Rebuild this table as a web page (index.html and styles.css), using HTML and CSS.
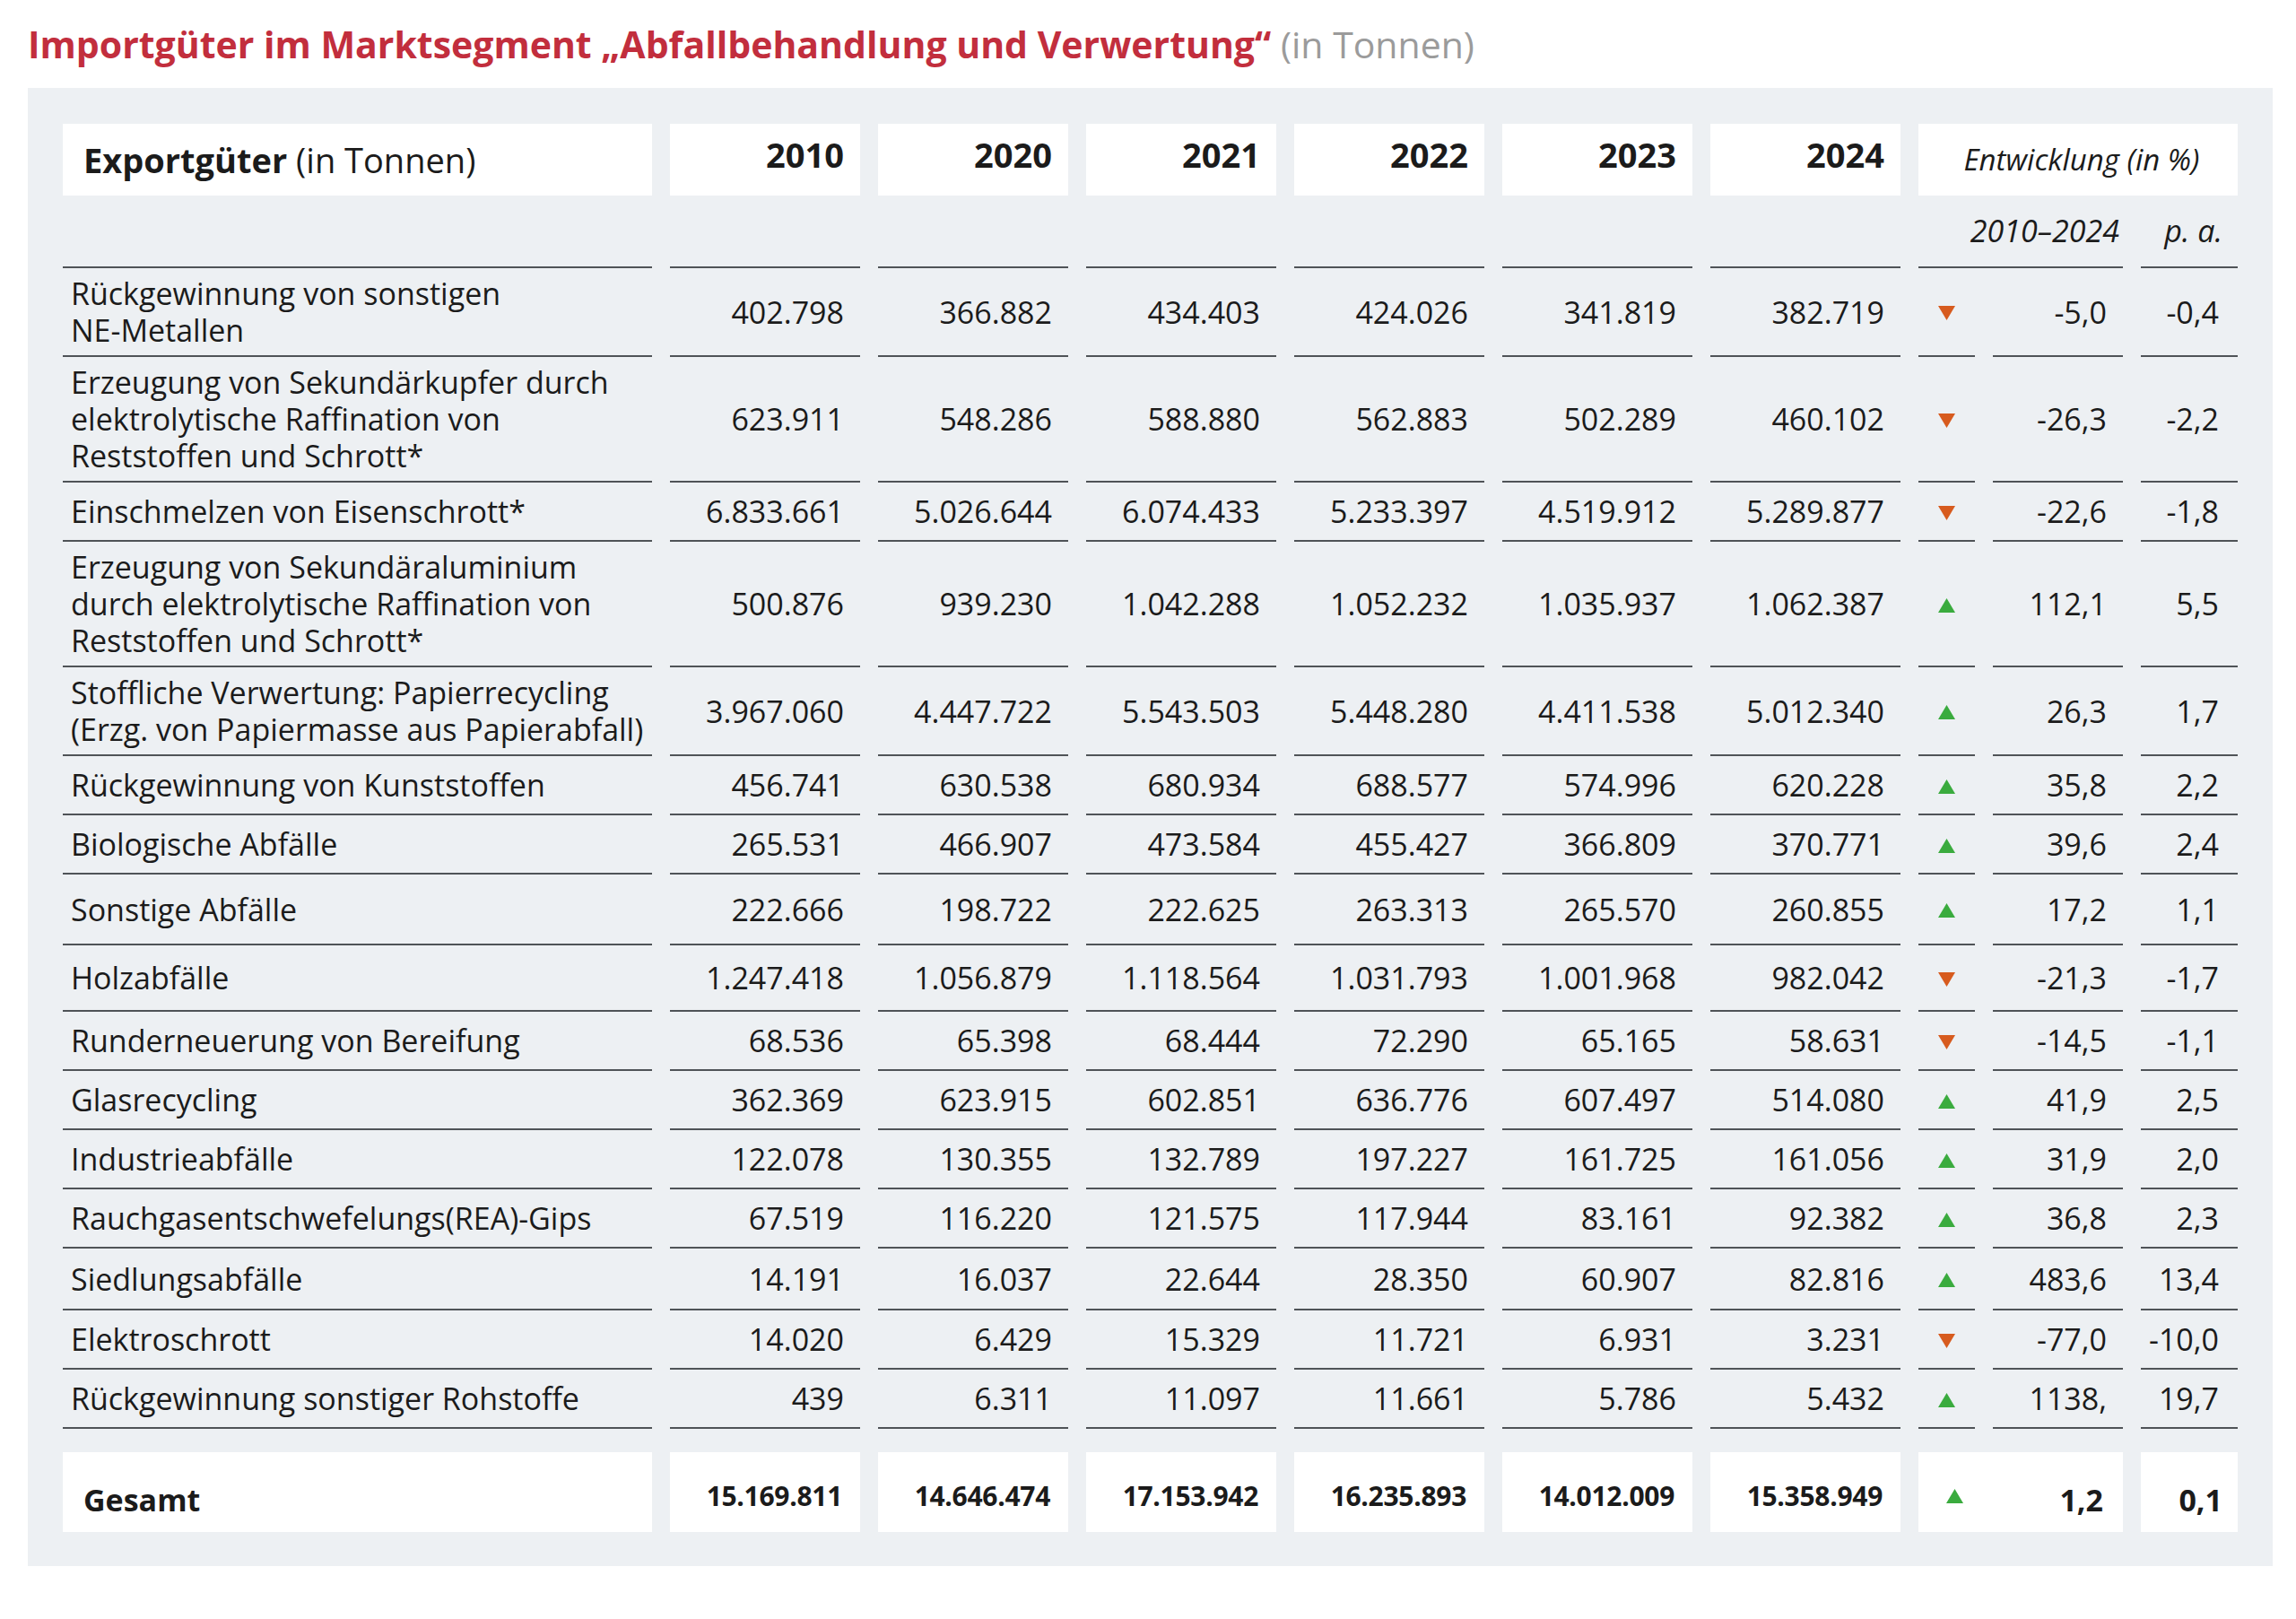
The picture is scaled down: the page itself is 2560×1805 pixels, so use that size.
FILE: index.html
```html
<!DOCTYPE html>
<html lang="de">
<head>
<meta charset="utf-8">
<title>Importgüter im Marktsegment Abfallbehandlung und Verwertung</title>
<link rel="stylesheet" href="styles.css">
</head>
<body>
<div class="page">
  <h1 class="title">Importgüter im Marktsegment „Abfallbehandlung und Verwertung“ <span class="title-unit">(in Tonnen)</span></h1>
  <div class="panel">
    <table class="data">
      <colgroup>
        <col class="c-label"><col class="c-year"><col class="c-year"><col class="c-year"><col class="c-year"><col class="c-year"><col class="c-year"><col class="c-arrow"><col class="c-dev"><col class="c-pa">
      </colgroup>
      <thead>
        <tr class="head">
          <th class="lbl"><b>Exportgüter</b> <span class="unit">(in Tonnen)</span></th>
          <th class="num">2010</th><th class="num">2020</th><th class="num">2021</th><th class="num">2022</th><th class="num">2023</th><th class="num">2024</th>
          <th class="dev-head" colspan="3">Entwicklung (in %)</th>
        </tr>
        <tr class="sub">
          <td></td><td></td><td></td><td></td><td></td><td></td><td></td>
          <td class="sub-span" colspan="2">2010–2024</td>
          <td class="sub-pa">p. a.</td>
        </tr>
      </thead>
      <tbody>
        <tr class="row"><td class="lbl">Rückgewinnung von sonstigen<br>NE-Metallen</td><td class="num">402.798</td><td class="num">366.882</td><td class="num">434.403</td><td class="num">424.026</td><td class="num">341.819</td><td class="num">382.719</td><td class="arr"><svg class="tri" viewBox="0 0 19 16" width="19" height="16"><polygon class="down" points="0,0 19,0 9.5,16"/></svg></td><td class="num">-5,0</td><td class="num pa">-0,4</td></tr>
        <tr class="row"><td class="lbl">Erzeugung von Sekundärkupfer durch<br>elektrolytische Raffination von<br>Reststoffen und Schrott*</td><td class="num">623.911</td><td class="num">548.286</td><td class="num">588.880</td><td class="num">562.883</td><td class="num">502.289</td><td class="num">460.102</td><td class="arr"><svg class="tri" viewBox="0 0 19 16" width="19" height="16"><polygon class="down" points="0,0 19,0 9.5,16"/></svg></td><td class="num">-26,3</td><td class="num pa">-2,2</td></tr>
        <tr class="row"><td class="lbl">Einschmelzen von Eisenschrott*</td><td class="num">6.833.661</td><td class="num">5.026.644</td><td class="num">6.074.433</td><td class="num">5.233.397</td><td class="num">4.519.912</td><td class="num">5.289.877</td><td class="arr"><svg class="tri" viewBox="0 0 19 16" width="19" height="16"><polygon class="down" points="0,0 19,0 9.5,16"/></svg></td><td class="num">-22,6</td><td class="num pa">-1,8</td></tr>
        <tr class="row"><td class="lbl">Erzeugung von Sekundäraluminium<br>durch elektrolytische Raffination von<br>Reststoffen und Schrott*</td><td class="num">500.876</td><td class="num">939.230</td><td class="num">1.042.288</td><td class="num">1.052.232</td><td class="num">1.035.937</td><td class="num">1.062.387</td><td class="arr"><svg class="tri" viewBox="0 0 19 16" width="19" height="16"><polygon class="up" points="9.5,0 19,16 0,16"/></svg></td><td class="num">112,1</td><td class="num pa">5,5</td></tr>
        <tr class="row"><td class="lbl">Stoffliche Verwertung: Papierrecycling<br>(Erzg. von Papiermasse aus Papierabfall)</td><td class="num">3.967.060</td><td class="num">4.447.722</td><td class="num">5.543.503</td><td class="num">5.448.280</td><td class="num">4.411.538</td><td class="num">5.012.340</td><td class="arr"><svg class="tri" viewBox="0 0 19 16" width="19" height="16"><polygon class="up" points="9.5,0 19,16 0,16"/></svg></td><td class="num">26,3</td><td class="num pa">1,7</td></tr>
        <tr class="row"><td class="lbl">Rückgewinnung von Kunststoffen</td><td class="num">456.741</td><td class="num">630.538</td><td class="num">680.934</td><td class="num">688.577</td><td class="num">574.996</td><td class="num">620.228</td><td class="arr"><svg class="tri" viewBox="0 0 19 16" width="19" height="16"><polygon class="up" points="9.5,0 19,16 0,16"/></svg></td><td class="num">35,8</td><td class="num pa">2,2</td></tr>
        <tr class="row"><td class="lbl">Biologische Abfälle</td><td class="num">265.531</td><td class="num">466.907</td><td class="num">473.584</td><td class="num">455.427</td><td class="num">366.809</td><td class="num">370.771</td><td class="arr"><svg class="tri" viewBox="0 0 19 16" width="19" height="16"><polygon class="up" points="9.5,0 19,16 0,16"/></svg></td><td class="num">39,6</td><td class="num pa">2,4</td></tr>
        <tr class="row row-xl"><td class="lbl">Sonstige Abfälle</td><td class="num">222.666</td><td class="num">198.722</td><td class="num">222.625</td><td class="num">263.313</td><td class="num">265.570</td><td class="num">260.855</td><td class="arr"><svg class="tri" viewBox="0 0 19 16" width="19" height="16"><polygon class="up" points="9.5,0 19,16 0,16"/></svg></td><td class="num">17,2</td><td class="num pa">1,1</td></tr>
        <tr class="row row-lg"><td class="lbl">Holzabfälle</td><td class="num">1.247.418</td><td class="num">1.056.879</td><td class="num">1.118.564</td><td class="num">1.031.793</td><td class="num">1.001.968</td><td class="num">982.042</td><td class="arr"><svg class="tri" viewBox="0 0 19 16" width="19" height="16"><polygon class="down" points="0,0 19,0 9.5,16"/></svg></td><td class="num">-21,3</td><td class="num pa">-1,7</td></tr>
        <tr class="row"><td class="lbl">Runderneuerung von Bereifung</td><td class="num">68.536</td><td class="num">65.398</td><td class="num">68.444</td><td class="num">72.290</td><td class="num">65.165</td><td class="num">58.631</td><td class="arr"><svg class="tri" viewBox="0 0 19 16" width="19" height="16"><polygon class="down" points="0,0 19,0 9.5,16"/></svg></td><td class="num">-14,5</td><td class="num pa">-1,1</td></tr>
        <tr class="row"><td class="lbl">Glasrecycling</td><td class="num">362.369</td><td class="num">623.915</td><td class="num">602.851</td><td class="num">636.776</td><td class="num">607.497</td><td class="num">514.080</td><td class="arr"><svg class="tri" viewBox="0 0 19 16" width="19" height="16"><polygon class="up" points="9.5,0 19,16 0,16"/></svg></td><td class="num">41,9</td><td class="num pa">2,5</td></tr>
        <tr class="row"><td class="lbl">Industrieabfälle</td><td class="num">122.078</td><td class="num">130.355</td><td class="num">132.789</td><td class="num">197.227</td><td class="num">161.725</td><td class="num">161.056</td><td class="arr"><svg class="tri" viewBox="0 0 19 16" width="19" height="16"><polygon class="up" points="9.5,0 19,16 0,16"/></svg></td><td class="num">31,9</td><td class="num pa">2,0</td></tr>
        <tr class="row"><td class="lbl">Rauchgasentschwefelungs(REA)-Gips</td><td class="num">67.519</td><td class="num">116.220</td><td class="num">121.575</td><td class="num">117.944</td><td class="num">83.161</td><td class="num">92.382</td><td class="arr"><svg class="tri" viewBox="0 0 19 16" width="19" height="16"><polygon class="up" points="9.5,0 19,16 0,16"/></svg></td><td class="num">36,8</td><td class="num pa">2,3</td></tr>
        <tr class="row row-md"><td class="lbl">Siedlungsabfälle</td><td class="num">14.191</td><td class="num">16.037</td><td class="num">22.644</td><td class="num">28.350</td><td class="num">60.907</td><td class="num">82.816</td><td class="arr"><svg class="tri" viewBox="0 0 19 16" width="19" height="16"><polygon class="up" points="9.5,0 19,16 0,16"/></svg></td><td class="num">483,6</td><td class="num pa">13,4</td></tr>
        <tr class="row"><td class="lbl">Elektroschrott</td><td class="num">14.020</td><td class="num">6.429</td><td class="num">15.329</td><td class="num">11.721</td><td class="num">6.931</td><td class="num">3.231</td><td class="arr"><svg class="tri" viewBox="0 0 19 16" width="19" height="16"><polygon class="down" points="0,0 19,0 9.5,16"/></svg></td><td class="num">-77,0</td><td class="num pa">-10,0</td></tr>
        <tr class="row"><td class="lbl">Rückgewinnung sonstiger Rohstoffe</td><td class="num">439</td><td class="num">6.311</td><td class="num">11.097</td><td class="num">11.661</td><td class="num">5.786</td><td class="num">5.432</td><td class="arr"><svg class="tri" viewBox="0 0 19 16" width="19" height="16"><polygon class="up" points="9.5,0 19,16 0,16"/></svg></td><td class="num">1138,</td><td class="num pa">19,7</td></tr>
        <tr class="gap"><td colspan="10"></td></tr>
      </tbody>
      <tfoot>
        <tr class="total">
          <td class="lbl">Gesamt</td>
          <td class="num">15.169.811</td><td class="num">14.646.474</td><td class="num">17.153.942</td><td class="num">16.235.893</td><td class="num">14.012.009</td><td class="num">15.358.949</td>
          <td class="dev-total" colspan="2"><div class="dev-inner"><svg class="tri" viewBox="0 0 19 16" width="19" height="16"><polygon class="up" points="9.5,0 19,16 0,16"/></svg><span>1,2</span></div></td>
          <td class="num pa">0,1</td>
        </tr>
      </tfoot>
    </table>
  </div>
</div>
</body>
</html>
```

FILE: styles.css
```css
* { box-sizing: border-box; }

html, body {
  margin: 0;
  background: #ffffff;
}

body {
  font-family: "Open Sans", "Liberation Sans", sans-serif;
  color: #1b1b1b;
}

.page {
  padding: 23px 26px 40px 31px;
}

.title {
  margin: 0 0 22px;
  font-size: 41px;
  line-height: 53px;
  font-weight: 700;
  color: #c22e3d;
}

.title-unit {
  font-weight: 400;
  color: #9b9b9b;
}

.panel {
  background: #edf0f3;
  padding: 40px 19px 38px;
}

.data {
  width: 100%;
  table-layout: fixed;
  border-collapse: separate;
  border-spacing: 20px 0;
  font-size: 34px;
  line-height: 41px;
}

.c-label { width: 657px; }
.c-year { width: 212px; }
.c-arrow { width: 63px; }
.c-dev { width: 145px; }
.c-pa { width: 108px; }

.data th,
.data td {
  padding: 0;
  vertical-align: middle;
  font-weight: 400;
}

/* header */
.data .head th {
  background: #ffffff;
  height: 80px;
  font-size: 38px;
  line-height: 46px;
}

.data .head .lbl {
  text-align: left;
  padding-left: 23px;
}

.head .lbl b { font-weight: 700; }

.data .head .num {
  text-align: right;
  font-weight: 700;
  padding-right: 18px;
  padding-bottom: 12px;
}

.data .head .dev-head {
  text-align: center;
  font-style: italic;
  font-size: 33px;
  padding-left: 8px;
}

/* sub header */
.data .sub td {
  height: 81px;
  border-bottom: 2px solid #4f5357;
  font-style: italic;
  font-size: 34px;
  text-align: right;
}

.data .sub .sub-span { padding-right: 4px; }
.data .sub .sub-pa { padding-right: 17px; }

/* data rows */
.data .row td {
  height: 66px;
  padding-top: 8px;
  padding-bottom: 7px;
  border-bottom: 2px solid #4f5357;
}

.data .row.row-xl td { height: 79px; }
.data .row.row-lg td { height: 74px; }
.data .row.row-md td { height: 69px; }

.data .row .lbl {
  padding-left: 9px;
  white-space: nowrap;
}

.data .num {
  text-align: right;
  padding-right: 18px;
}

.data .row .pa {
  padding-right: 21px;
}

.data .arr {
  text-align: center;
}

.tri {
  display: inline-block;
  vertical-align: middle;
  position: relative;
  top: -2px;
}

.down { fill: #d75b1e; }
.up { fill: #3aab3e; }

.data .gap td {
  height: 26px;
  padding: 0;
}

/* total */
.data .total td {
  background: #ffffff;
  height: 89px;
  padding-top: 8px;
  font-size: 30px;
  font-weight: 700;
  letter-spacing: -0.3px;
}

.data .total .num {
  padding-right: 20px;
}

.data .total .lbl {
  padding-left: 23px;
  padding-top: 17px;
  font-size: 34px;
  letter-spacing: 0;
}

.data .total .dev-total,
.data .total .pa {
  padding-top: 17px;
  font-size: 34px;
  letter-spacing: 0;
}

.data .total .pa {
  padding-right: 17px;
}

.dev-inner {
  display: flex;
  align-items: center;
  justify-content: space-between;
  padding-left: 31px;
  padding-right: 22px;
}

.dev-inner .tri {
  top: -4px;
}
```
